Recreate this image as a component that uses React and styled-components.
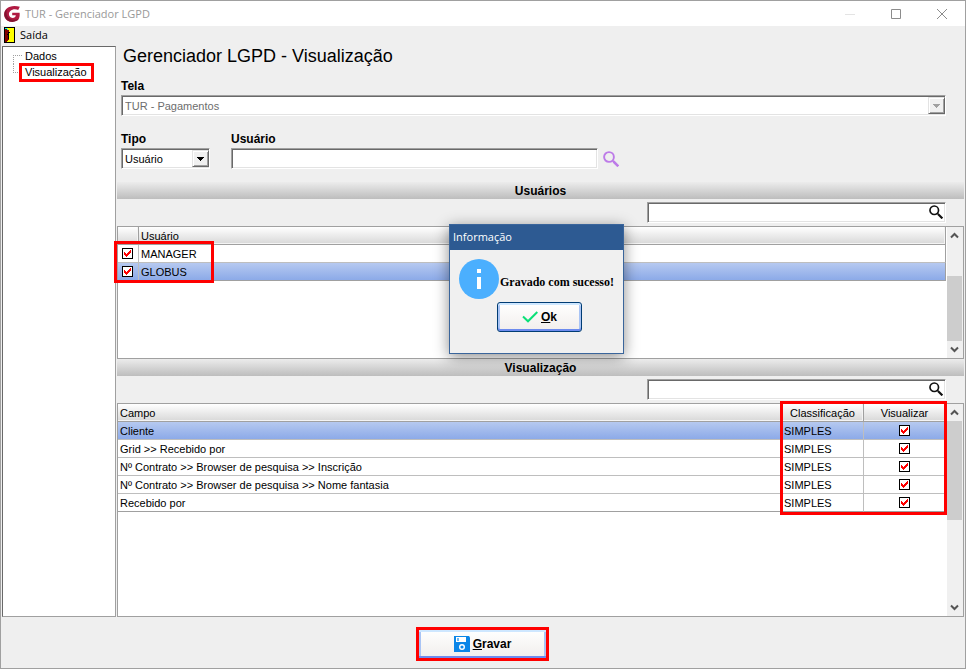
import React, { useState } from 'react';
import styled, { createGlobalStyle, css } from 'styled-components';

const GlobalStyle = createGlobalStyle`
   * {
      box-sizing: border-box;
   }
   body {
      margin: 0;
      background: #efefef;
      color: #000;
      font: 11px/16px 'Liberation Sans', Arial, sans-serif;
   }
   button, input, select {
      font: inherit;
      color: inherit;
   }
`;

const uiFont = "'Open Sans', 'Noto Sans', sans-serif";

const sunken = css`
   border: 1px solid;
   border-color: #a0a0a0 #fff #fff #a0a0a0;
   box-shadow: inset 1px 1px #696969, inset -1px -1px #e3e3e3;
   background: #fff;
`;

const Window = styled.div`
   position: relative;
   display: flex;
   flex-direction: column;
   min-height: 100vh;
   border: 1px solid #a0a0a0;
   background: #efefef;
`;

const TitleBar = styled.header`
   display: flex;
   align-items: center;
   height: 25px;
   padding-left: 3px;
   background: #fff;
   color: #999;
   font-family: ${uiFont};
`;

const Title = styled.span`
   flex: 1;
   margin-left: 5px;
`;

const WindowButton = styled.button`
   display: flex;
   align-items: center;
   justify-content: center;
   width: 46px;
   height: 24px;
   padding: 0;
   border: 0;
   background: none;
   color: ${p => (p.disabled ? '#e4e4e4' : '#8c8c8c')};
`;

const MenuBar = styled.nav`
   display: flex;
   align-items: center;
   height: 20px;
   padding: 0 0 2px 3px;
`;

const MenuItem = styled.button`
   display: flex;
   align-items: center;
   gap: 5px;
   padding: 0;
   border: 0;
   background: none;
   font-family: ${uiFont};
`;

const Body = styled.div`
   display: flex;
   flex: 1;
   gap: 1px;
   padding: 0 1px;
`;

const Tree = styled.ul`
   width: 114px;
   margin: 0;
   padding: 1px 0 0 10px;
   list-style: none;
   background: #fff;
   border: 1px solid #a0a0a0;
   border-left-color: #696969;
   border-top-color: #696969;
`;

const TreeItem = styled.li`
   display: flex;
   height: 16px;
   &::before {
      content: '';
      width: 8px;
      height: 8px;
      align-self: ${p => (p.$first ? 'flex-end' : 'flex-start')};
      border: 0 dotted #a0a0a0;
      border-width: ${p => (p.$first ? '1px 0 0 1px' : '0 0 1px 1px')};
   }
`;

const TreeLink = styled.a`
   align-self: center;
   padding: 0 4px 0 3px;
   line-height: 13px;
   color: inherit;
   text-decoration: none;
   outline: ${p => (p.$marked ? '3px solid #f00' : 'none')};
`;

const Content = styled.main`
   display: flex;
   flex: 1;
   flex-direction: column;
   min-width: 0;
`;

const Form = styled.form`
   display: flex;
   flex-direction: column;
   padding: 0 18px 13px 4px;
`;

const Heading = styled.h1`
   margin: 0 0 12px 2px;
   font-size: 18px;
   line-height: 20px;
   font-weight: normal;
`;

const FieldRow = styled.div`
   display: flex;
   align-items: flex-end;
   margin-top: 15px;
`;

const Field = styled.div`
   display: flex;
   flex-direction: column;
   gap: 1px;
   width: ${p => p.$width || 'auto'};
   margin-right: ${p => p.$gap || 0}px;
`;

const Label = styled.label`
   font-size: 12px;
   font-weight: bold;
`;

const SelectBox = styled.div`
   ${sunken}
   display: flex;
   height: 21px;
   padding: 1px 0 1px 1px;
`;

const NativeSelect = styled.select`
   flex: 1;
   min-width: 0;
   padding: 0 2px;
   appearance: none;
   border: 0;
   background: none;
   &:disabled {
      color: #6d6d6d;
      opacity: 1;
   }
`;

const SelectArrow = styled.span`
   display: flex;
   align-items: center;
   justify-content: center;
   width: 17px;
   background: #f0f0f0;
   border: 1px solid;
   border-color: #e3e3e3 #696969 #696969 #e3e3e3;
   box-shadow: inset 1px 1px #fff, inset -1px -1px #a0a0a0;
   color: ${p => (p.$disabled ? '#a0a0a0' : '#000')};
`;

const TextInput = styled.input`
   ${sunken}
   height: 21px;
   padding: 0 4px;
`;

const IconButton = styled.button`
   display: flex;
   margin: 0 0 2px 5px;
   padding: 0;
   border: 0;
   background: none;
`;

const SectionTitle = styled.h2`
   height: 17px;
   margin: 0;
   padding-top: 1px;
   background: linear-gradient(#ececec, #bdbdbd);
   font-size: 12px;
   line-height: 16px;
   text-align: center;
`;

const SearchBar = styled.div`
   display: flex;
   justify-content: flex-end;
   padding: 3px 18px 3px 0;
`;

const SearchBox = styled.div`
   ${sunken}
   display: flex;
   align-items: center;
   width: 299px;
   height: 21px;
   padding: 0 2px 2px;
`;

const SearchInput = styled.input`
   flex: 1;
   min-width: 0;
   padding: 0 2px;
   border: 0;
   outline: 0;
   background: none;
`;

const Grid = styled.section`
   position: relative;
   display: flex;
   flex: ${p => (p.$height ? 'none' : 1)};
   height: ${p => (p.$height ? `${p.$height}px` : 'auto')};
   border: 1px solid #a0a0a0;
   background: #fff;
`;

const TableArea = styled.div`
   flex: 1;
   min-width: 0;
   padding-right: 1px;
`;

const Table = styled.table`
   width: 100%;
   table-layout: fixed;
   border-collapse: separate;
   border-spacing: 0;
`;

const Th = styled.th`
   width: ${p => p.$width || 'auto'};
   height: 18px;
   padding: 1px 2px 0;
   line-height: 16px;
   font-weight: normal;
   text-align: ${p => p.$align || 'left'};
   background: linear-gradient(#fff, #d8d8d8);
   border: solid #a0a0a0;
   border-width: 0 1px 1px 0;
   box-shadow: inset -1px -1px #f4f4f4;
`;

const Td = styled.td`
   height: 18px;
   padding: ${p => (p.$check ? '0 5px 0 4px' : '1px 2px 0')};
   line-height: 16px;
   border: solid #bebebe;
   border-width: 0 1px 1px 0;
   &:last-child {
      border-right-color: #a0a0a0;
   }
`;

const Row = styled.tr`
   ${p => p.$selected && css`
      ${Td} {
         background: linear-gradient(#b6c9f0, #8caae8);
      }
   `}
   &:last-child ${Td} {
      border-bottom-color: #a0a0a0;
   }
`;

const tick = "url(\"data:image/svg+xml,%3Csvg xmlns='http://www.w3.org/2000/svg' width='7' height='7' shape-rendering='crispEdges'%3E%3Cpath fill='%23f00' d='M0 2h1v1h1v1h1v-1h1v-1h1v-1h1v-1h1v3h-1v1h-1v1h-1v1h-1v1h-1v-1h-1v-1h-1z'/%3E%3C/svg%3E\")";

const Checkbox = styled.input.attrs({ type: 'checkbox' })`
   display: block;
   width: 11px;
   height: 11px;
   margin: 0 auto;
   appearance: none;
   border: 1px solid #000;
   background: #fff center / 7px 7px no-repeat;
   &:checked {
      background-image: ${tick};
   }
`;

const ScrollTrack = styled.div`
   display: flex;
   flex-direction: column;
   width: 16px;
   background: #f0f0f0;
`;

const ScrollButton = styled.button`
   display: flex;
   align-items: center;
   justify-content: center;
   width: 15px;
   height: 17px;
   padding: 0;
   border: 0;
   background: none;
   color: #555;
`;

const ScrollSpace = styled.div`
   display: flex;
   flex: 1;
   flex-direction: column;
   justify-content: ${p => (p.$atEnd ? 'flex-end' : 'flex-start')};
`;

const ScrollThumb = styled.div`
   height: ${p => p.$size}px;
   width: 15px;
   background: #cdcdcd;
`;

// red frames drawn over the grids
const Marker = styled.div`
   position: absolute;
   border: 3px solid #f00;
   pointer-events: none;
`;

const UsersMarker = styled(Marker)`
   top: 14px;
   left: -4px;
   width: 100px;
   height: 42px;
`;

const FieldsMarker = styled(Marker)`
   top: -3px;
   right: 16px;
   width: 167px;
   height: 114px;
`;

const Footer = styled.footer`
   display: flex;
   align-items: center;
   justify-content: center;
   height: 51px;
   padding: 3px 1px 0 0;
`;

const PushButton = styled.button`
   display: flex;
   align-items: center;
   justify-content: center;
   gap: ${p => p.$gap}px;
   width: ${p => p.$width}px;
   height: ${p => p.$height}px;
   padding: 0;
   border: ${p => (p.$marked ? '0' : '1px solid #003c74')};
   border-radius: ${p => (p.$marked ? 0 : 3)}px;
   outline: ${p => (p.$marked ? '3px solid #f00' : 'none')};
   background: linear-gradient(#fff, #f1eeec);
   box-shadow: inset 0 2px #cee7ff, inset 0 -2px #6d8bee, inset 2px 0 #a9c4f5, inset -2px 0 #a9c4f5;
   font-size: 12px;
   font-weight: bold;
`;

const Dialog = styled.div`
   position: absolute;
   top: 223px;
   left: 448px;
   width: 175px;
   height: 130px;
   border: 1px solid #3a659b;
   background: #f0f0f0;
   box-shadow: 0 3px 14px rgba(0, 0, 0, 0.45);
`;

const DialogTitle = styled.div`
   height: 25px;
   padding-left: 3px;
   background: #2d5a92;
   color: #fff;
   font-family: ${uiFont};
   line-height: 24px;
`;

const DialogMessage = styled.div`
   display: flex;
   align-items: center;
   gap: 1px;
   padding: 9px 0 3px 9px;
   font: bold 12px/16px 'Liberation Serif', 'Times New Roman', serif;
   white-space: nowrap;
   p {
      margin: 6px 0 0;
   }
`;

const DialogActions = styled.div`
   display: flex;
   justify-content: center;
   padding-left: 6px;
`;

const LogoIcon = () => (
   <svg width="16" height="16" viewBox="0 0 16 16" aria-hidden="true">
      <path d="M15.8 .8C11 -.6 5.500 -.2 2.500 2.700C-.8 6 -.6 11.200 2.600 13.900C6 16.800 12.500 16.300 14.700 13C15.700 11.300 15.800 9 15.600 6.800H8.200V9.300H11.800C11.600 12 8.500 12.600 6.500 11.200C4.300 9.500 4.500 6.500 6.300 4.900C8.500 2.900 12 2.900 14.200 4Z" fill="#b01a42" />
      <path d="M.8 5.500C-.3 9 .6 12.200 3.500 14.500C7 16.800 12.500 16.200 14.600 13.100C10 14.600 6 13.800 4 11.200C2.600 9.300 2.100 7 2.800 3Z" fill="#82142f" />
   </svg>
);

const DoorIcon = () => (
   <svg width="11" height="16" viewBox="0 0 11 16" shapeRendering="crispEdges" aria-hidden="true">
      <path d="M0 0H11V16H0Z" fill="#000" />
      <path d="M1 1H10V15H1Z" fill="#ff0" />
      <path d="M1 1H3V2H4V3H5V13H4V14H3V15H1Z" fill="#800000" />
      <path d="M1 1H3V2H1ZM3 2H4V3H3Z" fill="#0ff" />
      <path d="M4 5H6V6H5V12H4V8H3V7H4Z" fill="#000" />
   </svg>
);

const SearchIcon = ({ size, color }) => (
   <svg width={size} height={size} viewBox="0 0 16 16" fill="none" stroke={color} aria-hidden="true">
      <circle cx="6" cy="6" r="4.900" strokeWidth="1.900" />
      <path d="M9.500 9.500L11 11" strokeWidth="1.700" />
      <path d="M10.500 10.500L15.300 15.300" strokeWidth="2.500" />
   </svg>
);

const DownArrow = () => (
   <svg width="7" height="4" viewBox="0 0 7 4" shapeRendering="crispEdges" aria-hidden="true">
      <path d="M0 0H7V1H6V2H5V3H4V4H3V3H2V2H1V1H0Z" fill="currentColor" />
   </svg>
);

const Chevron = ({ up }) => (
   <svg width="9" height="7" viewBox="0 0 9 7" fill="none" stroke="currentColor" strokeWidth="2" aria-hidden="true">
      <path d={up ? 'M1 5.500L4.500 2L8 5.500' : 'M1 1.500L4.500 5L8 1.500'} />
   </svg>
);

const DiskIcon = () => (
   <svg width="16" height="16" viewBox="0 0 16 16" aria-hidden="true">
      <path d="M0 0H15L16 1.500V16H0Z" fill="#0b86e8" />
      <path d="M2 1H12V6H2Z" fill="#fff" />
      <path d="M3 2H5V5H3Z" fill="#6db8f2" />
      <circle cx="8" cy="11" r="2.300" fill="none" stroke="#fff" strokeWidth="1.400" />
   </svg>
);

const CheckIcon = () => (
   <svg width="16" height="12" viewBox="0 0 16 12" fill="none" stroke="#0be078" strokeWidth="2" aria-hidden="true">
      <path d="M1 5.500L6 10.300L15.300 1" />
   </svg>
);

const InfoIcon = () => (
   <svg width="40" height="40" viewBox="0 0 40 40" aria-hidden="true">
      <circle cx="20" cy="20" r="20" fill="#4baffe" />
      <path d="M18 10H22V14H18ZM18 18H22V30H18Z" fill="#fff" />
   </svg>
);

const Select = ({ id, value, disabled }) => (
   <SelectBox>
      <NativeSelect id={id} disabled={disabled} defaultValue={value}>
         <option>{value}</option>
      </NativeSelect>
      <SelectArrow $disabled={disabled}><DownArrow /></SelectArrow>
   </SelectBox>
);

const Search = ({ label }) => (
   <SearchBar>
      <SearchBox>
         <SearchInput type="text" aria-label={label} />
         <SearchIcon size={14} color="#111" />
      </SearchBox>
   </SearchBar>
);

const Scrollbar = ({ size, atEnd }) => (
   <ScrollTrack>
      <ScrollButton aria-label="Rolar para cima"><Chevron up /></ScrollButton>
      <ScrollSpace $atEnd={atEnd}>
         <ScrollThumb $size={size} />
      </ScrollSpace>
      <ScrollButton aria-label="Rolar para baixo"><Chevron /></ScrollButton>
   </ScrollTrack>
);

const users = ['MANAGER', 'GLOBUS'];

const fields = [
   'Cliente',
   'Grid >> Recebido por',
   'Nº Contrato >> Browser de pesquisa >> Inscrição',
   'Nº Contrato >> Browser de pesquisa >> Nome fantasia',
   'Recebido por',
];

const App = () => {
   const [open, setOpen] = useState(true);

   return (
      <Window>
         <GlobalStyle />
         <TitleBar>
            <LogoIcon />
            <Title>TUR - Gerenciador LGPD</Title>
            <WindowButton aria-label="Minimizar" disabled>
               <svg width="10" height="10"><path d="M0 5.500H10" stroke="currentColor" /></svg>
            </WindowButton>
            <WindowButton aria-label="Maximizar">
               <svg width="10" height="10"><path d="M.5 .5H9.500V9.500H.5Z" fill="none" stroke="currentColor" /></svg>
            </WindowButton>
            <WindowButton aria-label="Fechar">
               <svg width="10" height="10"><path d="M0 0L10 10M10 0L0 10" stroke="currentColor" /></svg>
            </WindowButton>
         </TitleBar>
         <MenuBar>
            <MenuItem><DoorIcon />Saída</MenuItem>
         </MenuBar>
         <Body>
            <Tree>
               <TreeItem $first><TreeLink href="#dados">Dados</TreeLink></TreeItem>
               <TreeItem><TreeLink href="#visualizacao" $marked>Visualização</TreeLink></TreeItem>
            </Tree>
            <Content>
               <Form onSubmit={e => e.preventDefault()}>
                  <Heading>Gerenciador LGPD - Visualização</Heading>
                  <Field>
                     <Label htmlFor="tela">Tela</Label>
                     <Select id="tela" value="TUR - Pagamentos" disabled />
                  </Field>
                  <FieldRow>
                     <Field $width="89px" $gap={21}>
                        <Label htmlFor="tipo">Tipo</Label>
                        <Select id="tipo" value="Usuário" />
                     </Field>
                     <Field $width="367px">
                        <Label htmlFor="usuario">Usuário</Label>
                        <TextInput id="usuario" type="text" />
                     </Field>
                     <IconButton type="button" aria-label="Pesquisar usuário">
                        <SearchIcon size={16} color="#bd7be8" />
                     </IconButton>
                  </FieldRow>
               </Form>

               <SectionTitle>Usuários</SectionTitle>
               <Search label="Pesquisar usuários" />
               <Grid $height={133}>
                  <TableArea>
                     <Table>
                        <thead>
                           <tr>
                              <Th $width="21px" aria-label="Selecionado" />
                              <Th>Usuário</Th>
                           </tr>
                        </thead>
                        <tbody>
                           {users.map((user, i) => (
                              <Row key={user} $selected={i === 1}>
                                 <Td $check><Checkbox defaultChecked aria-label={user} /></Td>
                                 <Td>{user}</Td>
                              </Row>
                           ))}
                        </tbody>
                     </Table>
                  </TableArea>
                  <Scrollbar size={65} atEnd />
                  <UsersMarker />
               </Grid>

               <SectionTitle>Visualização</SectionTitle>
               <Search label="Pesquisar campos" />
               <Grid>
                  <TableArea>
                     <Table>
                        <thead>
                           <tr>
                              <Th>Campo</Th>
                              <Th $width="82px" $align="center">Classificação</Th>
                              <Th $width="82px" $align="center">Visualizar</Th>
                           </tr>
                        </thead>
                        <tbody>
                           {fields.map((field, i) => (
                              <Row key={field} $selected={i === 0}>
                                 <Td>{field}</Td>
                                 <Td>SIMPLES</Td>
                                 <Td $check><Checkbox defaultChecked aria-label={`Visualizar ${field}`} /></Td>
                              </Row>
                           ))}
                        </tbody>
                     </Table>
                  </TableArea>
                  <Scrollbar size={99} />
                  <FieldsMarker />
               </Grid>
            </Content>
         </Body>
         <Footer>
            <PushButton $width={127} $height={28} $gap={3} $marked>
               <DiskIcon />
               <span><u>G</u>ravar</span>
            </PushButton>
         </Footer>

         {open && (
            <Dialog role="dialog" aria-label="Informação">
               <DialogTitle>Informação</DialogTitle>
               <DialogMessage>
                  <InfoIcon />
                  <p>Gravado com sucesso!</p>
               </DialogMessage>
               <DialogActions>
                  <PushButton $width={85} $height={30} $gap={3} onClick={() => setOpen(false)}>
                     <CheckIcon />
                     <span><u>O</u>k</span>
                  </PushButton>
               </DialogActions>
            </Dialog>
         )}
      </Window>
   );
};

export default App;
